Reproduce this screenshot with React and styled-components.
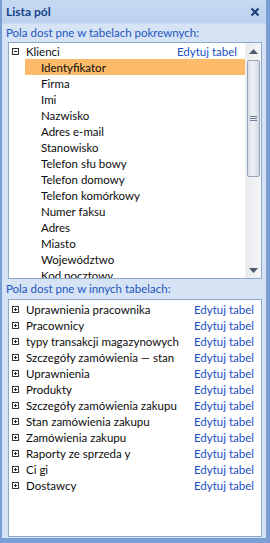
import React from "react";
import styled, { createGlobalStyle } from "styled-components";

const Global = createGlobalStyle`
  html, body { margin: 0; padding: 0; background: #fff; }
  body { font-family: Lato, "Noto Sans", sans-serif; }
`;

const Frame = styled.div`
  width: 270px;
  height: 543px;
  box-sizing: border-box;
  border-left: 2px solid #7b9fd4;
  border-right: 4px solid #7b9fd4;
  border-bottom: 5px solid #7b9fd4;
  background: #d5e3f4;
  display: flex;
  flex-direction: column;
  font-size: 11.5px;
  color: #0c0c0c;
`;

const TitleBar = styled.div`
  height: 23px;
  flex: none;
  display: flex;
  align-items: center;
  justify-content: space-between;
  padding: 0 6px 0 4px;
  background: linear-gradient(#c6d9f1, #bcd2ee);
  border-bottom: 1px solid #c9dbf1;
`;

const Title = styled.span`
  font-weight: bold;
  color: #15428b;
  font-size: 12px;
`;

const Body = styled.div`
  flex: 1;
  display: flex;
  flex-direction: column;
  padding: 0 4px 2px 6px;
  min-height: 0;
`;

const SectionLabel = styled.div`
  color: #2456c0;
  height: ${(p) => p.$h}px;
  line-height: ${(p) => p.$h}px;
  margin-left: -2px;
  white-space: nowrap;
`;

const Box = styled.div`
  height: ${(p) => p.$h}px;
  flex: none;
  box-sizing: border-box;
  border: 1px solid #8ea8cc;
  background: #fff;
  display: flex;
  overflow: hidden;
`;

const List = styled.div`
  flex: 1;
  min-width: 0;
  display: flex;
  flex-direction: column;
  padding-top: ${(p) => p.$pt || 0}px;
`;

const Row = styled.div`
  height: 16px;
  flex: none;
  display: flex;
  align-items: center;
  white-space: nowrap;
  padding-left: ${(p) => p.$indent}px;
  padding-right: ${(p) => p.$pr || 0}px;
  margin-left: ${(p) => p.$ml || 0}px;
  background: ${(p) => (p.$sel ? "#fdbb6a" : "transparent")};
`;

const Name = styled.span`
  flex: 1;
  overflow: hidden;
  margin-left: ${(p) => p.$gap || 0}px;
`;

const Link = styled.span`
  color: #2050bf;
  flex: none;
  margin-left: 6px;
`;

const Toggle = styled.span`
  width: 7px;
  height: 7px;
  box-sizing: border-box;
  border: 1px solid #333;
  position: relative;
  flex: none;
  &::before {
    content: "";
    position: absolute;
    left: 1px;
    right: 1px;
    top: 2px;
    height: 1px;
    background: #222;
  }
  &::after {
    content: "";
    display: ${(p) => (p.$plus ? "block" : "none")};
    position: absolute;
    top: 1px;
    bottom: 1px;
    left: 2px;
    width: 1px;
    background: #222;
  }
`;

const Scrollbar = styled.div`
  width: 15px;
  flex: none;
  display: flex;
  flex-direction: column;
  background: linear-gradient(90deg, #e9ebee, #f6f6f7);
  border-left: 1px solid #eef0f3;
`;

const Arrow = styled.div`
  height: 16px;
  flex: none;
  display: flex;
  align-items: center;
  justify-content: center;
`;

const Track = styled.div`
  flex: 1;
  display: flex;
  flex-direction: column;
  padding: 1px 1px 0 1px;
`;

const Thumb = styled.div`
  height: 117px;
  box-sizing: border-box;
  border: 1px solid #98a5b8;
  border-radius: 2px;
  background: linear-gradient(90deg, #d7dee8, #eef1f5 45%, #d2d9e4);
  display: flex;
  flex-direction: column;
  align-items: center;
  justify-content: center;
  gap: 1px;
`;

const Grip = styled.span`
  width: 7px;
  height: 1px;
  background: #6f7f95;
`;

const Close = () => (
  <svg width="10" height="10" viewBox="0 0 10 10">
    <path d="M1.5 1.5 L8.5 8.5 M8.5 1.5 L1.5 8.5" stroke="#1b3f7c" strokeWidth="2" />
  </svg>
);

const Tri = ({ down }) => (
  <svg width="9" height="5" viewBox="0 0 9 5">
    <path d={down ? "M0 0 H9 L4.5 5 Z" : "M0 5 H9 L4.5 0 Z"} fill="#4d5a6e" />
  </svg>
);

const fields = [
  "Identyfikator",
  "Firma",
  "Imi",
  "Nazwisko",
  "Adres e-mail",
  "Stanowisko",
  "Telefon słu bowy",
  "Telefon domowy",
  "Telefon komórkowy",
  "Numer faksu",
  "Adres",
  "Miasto",
  "Województwo",
  "Kod pocztowy",
];

const others = [
  "Uprawnienia pracownika",
  "Pracownicy",
  "typy transakcji magazynowych",
  "Szczegóły zamówienia — stan",
  "Uprawnienia",
  "Produkty",
  "Szczegóły zamówienia zakupu",
  "Stan zamówienia zakupu",
  "Zamówienia zakupu",
  "Raporty ze sprzeda y",
  "Ci gi",
  "Dostawcy",
];

export default function App() {
  return (
    <>
      <Global />
      <Frame>
        <TitleBar>
          <Title>Lista pól</Title>
          <Close />
        </TitleBar>
        <Body>
          <SectionLabel $h={18}>Pola dost pne w tabelach pokrewnych:</SectionLabel>
          <Box $h={237}>
            <List>
              <Row $indent={3} $pr={8}>
                <Toggle />
                <Name $gap={7}>Klienci</Name>
                <Link>Edytuj tabel</Link>
              </Row>
              {fields.map((f, i) => (
                <Row key={f} $indent={16} $ml={16} $sel={i === 0}>
                  <Name>{f}</Name>
                </Row>
              ))}
            </List>
            <Scrollbar>
              <Arrow>
                <Tri />
              </Arrow>
              <Track>
                <Thumb>
                  <Grip />
                  <Grip />
                  <Grip />
                </Thumb>
              </Track>
              <Arrow>
                <Tri down />
              </Arrow>
            </Scrollbar>
          </Box>
          <SectionLabel $h={20}>Pola dost pne w innych tabelach:</SectionLabel>
          <Box $h={238}>
            <List $pt={1}>
              {others.map((o) => (
                <Row key={o} $indent={3} $pr={7}>
                  <Toggle $plus />
                  <Name $gap={7}>{o}</Name>
                  <Link>Edytuj tabel</Link>
                </Row>
              ))}
            </List>
          </Box>
        </Body>
      </Frame>
    </>
  );
}
